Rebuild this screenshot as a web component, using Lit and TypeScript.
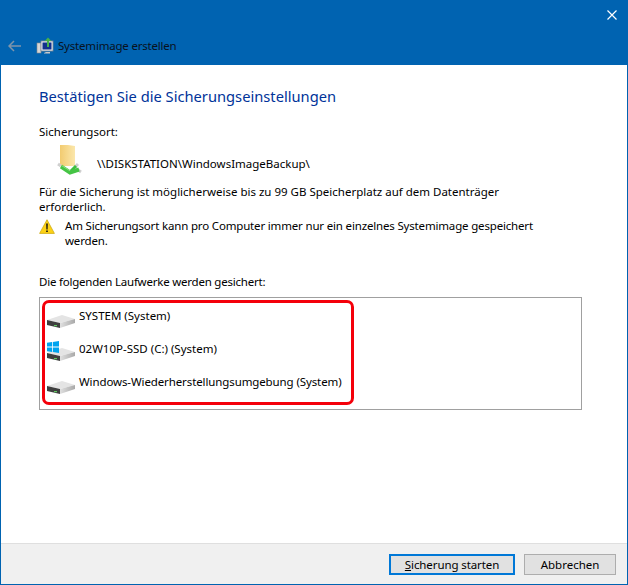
import { LitElement, html, css, svg } from "lit";
import { customElement } from "lit/decorators.js";

const disk = svg`
  <defs><linearGradient id="side" x1="0" x2="1" y1="0" y2="0"><stop offset="0" stop-color="#e0e0e0"/><stop offset="1" stop-color="#a9a9a9"/></linearGradient></defs>
  <path d="M1 20 16 15 29 19 14 23Z" fill="#e4e4e4"/>
  <path d="M14 23 29 19V23L14 28Z" fill="url(#side)"/>
  <path d="M1 20 14 23V28L1 25Z" fill="#3f3f3f"/>
  <rect x="8" y="25" width="3" height="1.2" fill="#63c963"/>
`;

@customElement("app-root")
export class AppRoot extends LitElement {
  static styles = css`
    :host { display: block; width: 628px; height: 585px; font-family: "Noto Sans", "Open Sans", sans-serif; font-size: 11.5px; color: #000; }
    * { box-sizing: border-box; }
    .win { width: 628px; height: 585px; display: flex; flex-direction: column; background: #0063b1; padding: 0 1px 1px; }
    .top { height: 65px; flex: none; display: flex; flex-direction: column; }
    .closeRow { height: 30px; display: flex; justify-content: flex-end; align-items: center; padding-right: 10px; }
    .titleRow { display: flex; align-items: center; height: 31px; padding-left: 7px; font-size: 11.5px; letter-spacing: -0.2px; color: #08121e; }
    .titleRow .back { margin-right: 14px; }
    .titleRow .sys { margin-right: 4px; }
    .body { flex: 1; background: #fff; padding: 21px 38px 0; position: relative; }
    h1 { margin: 0 0 18px; font-weight: 400; font-size: 14.7px; line-height: 20px; color: #003399; }
    p { margin: 0; line-height: 15px; }
    .dest { display: flex; align-items: center; height: 33px; margin: 4px 0 8px 16px; gap: 10px; }
    .dest span { margin-top: 7px; }
    .warn { display: flex; gap: 10px; margin-top: 4px; }
    .warn svg { flex: none; margin-top: 1px; }
    .warn p { letter-spacing: -0.17px; white-space: nowrap; }
    .lbl { margin-top: 26px; letter-spacing: -0.22px; }
    .list { margin-top: 8px; width: 543px; height: 113px; border: 1px solid #a0a0a0; padding: 2px 0 0 6px; position: relative; }
    .drive { height: 33px; display: flex; align-items: flex-start; gap: 1px; position: relative; }
    .drive svg.disk { flex: none; }
    .drive span { line-height: 16px; margin-top: 8px; }
    .long { letter-spacing: -0.11px; }
    .win-logo { position: absolute; left: 1px; top: 8px; }
    .mark { position: absolute; left: 2px; top: 2px; width: 312px; height: 105px; border: 3px solid #f4000a; border-radius: 7px; }
    .foot { height: 41px; flex: none; background: #f0f0f0; border-top: 1px solid #dfdfdf; display: flex; justify-content: flex-end; align-items: center; gap: 9px; padding: 0 11px 0 0; }
    button { font: inherit; height: 21px; padding: 0; background: #e1e1e1; color: #000; border: 1px solid #adadad; }
    .primary { width: 126px; border: 2px solid #0078d7; letter-spacing: -0.1px; }
    .cancel { width: 92px; }
    u { text-underline-offset: 1px; }
  `;

  render() {
    return html`
      <div class="win">
        <div class="top">
          <div class="closeRow">
            <svg width="10" height="10" viewBox="0 0 10 10"><path d="M.5.5 9.5 9.5M9.5.5 .5 9.5" stroke="#fff" stroke-width="1.2" fill="none"/></svg>
          </div>
          <div class="titleRow">
            <svg class="back" width="14" height="12" viewBox="0 0 14 12"><path d="M6 1 1 6l5 5M1 6h12" stroke="#7f95aa" stroke-width="1.5" fill="none"/></svg>
            <svg class="sys" width="18" height="18" viewBox="0 0 18 18">
              <rect x="1" y="6" width="4" height="10" fill="#d6d6d6" stroke="#8a8a8a" stroke-width=".6"/>
              <rect x="5" y="4" width="12" height="10" fill="#e8ecf0" stroke="#7c8794" stroke-width=".8"/>
              <rect x="6.5" y="5.5" width="9" height="7" fill="#10308c"/>
              <path d="M10 15h4v1.5H8V16z" fill="#c8c8c8"/>
              <path d="M11 10V4H8.7L12 .5 15.3 4H13v6z" fill="#46b04a"/>
            </svg>
            <span>Systemimage erstellen</span>
          </div>
        </div>
        <div class="body">
          <h1>Bestätigen Sie die Sicherungseinstellungen</h1>
          <p>Sicherungsort:</p>
          <div class="dest">
            <svg width="32" height="33" viewBox="0 0 32 33">
              <defs><linearGradient id="fld" x1="0" x2="1" y1="0" y2="0"><stop offset="0" stop-color="#f2cb70"/><stop offset="1" stop-color="#fbe7ac"/></linearGradient></defs>
              <path d="M5 2H13L20 3V23H5Z" fill="url(#fld)"/>
              <path d="M3 21 6 23M23 21 20 24M26 29 23 27" stroke="#cfcfcf" stroke-width="3" fill="none"/>
              <path d="M16 28 21 23" stroke="#3fbf3f" stroke-width="3" fill="none"/>
              <path d="M6 23.5 15 29.5 24 26.5" stroke="#45c445" stroke-width="4" fill="none"/>
              <path d="M7 22.8 15 27.8" stroke="#8ce07c" stroke-width="1" fill="none"/>
            </svg>
            <span>\\\\DISKSTATION\\WindowsImageBackup\\</span>
          </div>
          <p>Für die Sicherung ist möglicherweise bis zu 99 GB Speicherplatz auf dem Datenträger<br>erforderlich.</p>
          <div class="warn">
            <svg width="16" height="15" viewBox="0 0 16 15"><path d="M8 .7 15.4 14.4H.6z" fill="#fcd116" stroke="#c8a400" stroke-width=".7"/><path d="M7.2 4.5h1.6l-.2 6H7.4zM7.2 11.5h1.6v1.6H7.2z" fill="#111"/></svg>
            <p>Am Sicherungsort kann pro Computer immer nur ein einzelnes Systemimage gespeichert<br>werden.</p>
          </div>
          <p class="lbl">Die folgenden Laufwerke werden gesichert:</p>
          <div class="list">
            <div class="drive"><svg class="disk" width="32" height="28" viewBox="0 0 32 28">${disk}</svg><span>SYSTEM (System)</span></div>
            <div class="drive">
              <svg class="disk" width="32" height="28" viewBox="0 0 32 28">${disk}</svg>
              <svg class="win-logo" width="12" height="12" viewBox="0 0 12 12"><path d="M0 1.7 5 1V5.6H0ZM5.8.9 12 0V5.6H5.8ZM0 6.4H5V11L0 10.3ZM5.8 6.4H12V12L5.8 11.1Z" fill="#00a4ef"/></svg>
              <span>02W10P-SSD (C:) (System)</span>
            </div>
            <div class="drive"><svg class="disk" width="32" height="28" viewBox="0 0 32 28">${disk}</svg><span class="long">Windows-Wiederherstellungsumgebung (System)</span></div>
            <div class="mark"></div>
          </div>
        </div>
        <div class="foot">
          <button class="primary"><u>S</u>icherung starten</button>
          <button class="cancel">Abbrechen</button>
        </div>
      </div>
    `;
  }
}
